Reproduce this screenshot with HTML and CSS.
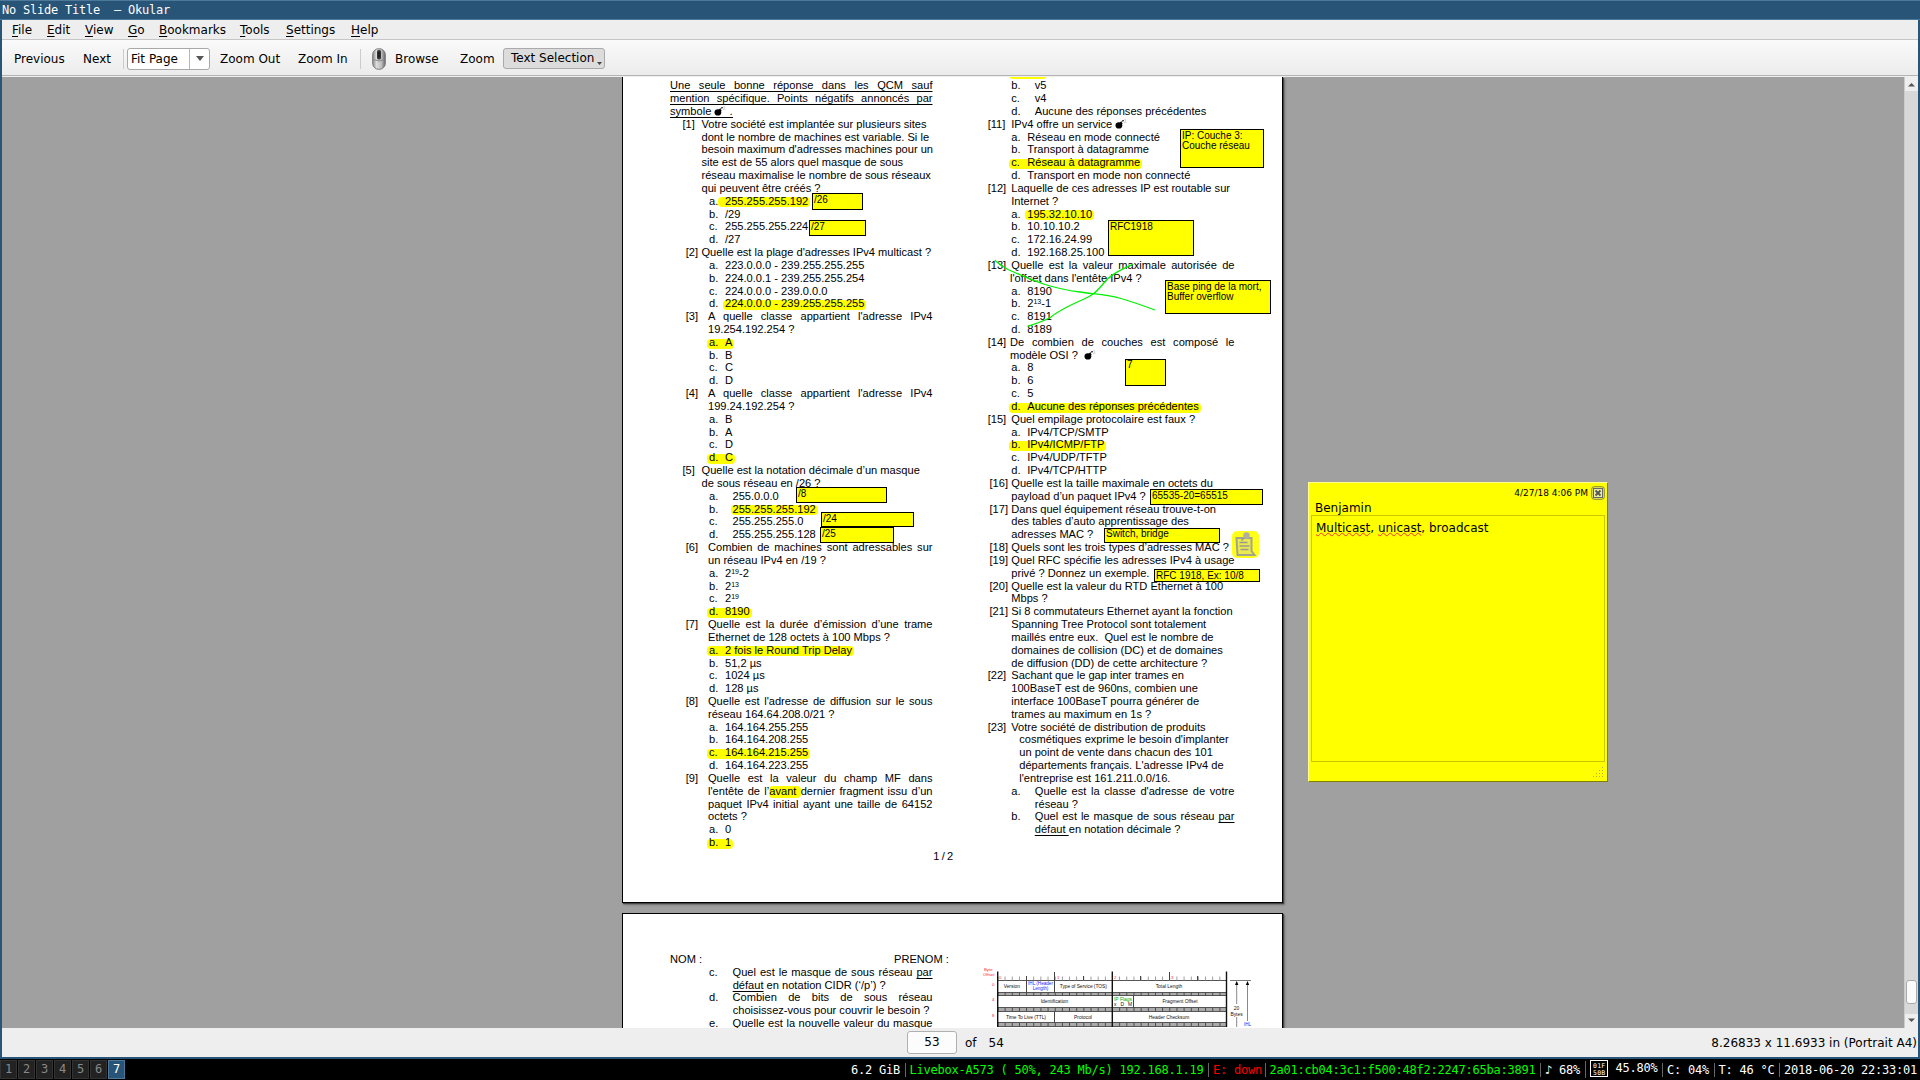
FILE: index.html
```html
<!DOCTYPE html>
<html lang="fr">
<head>
<meta charset="utf-8">
<title>No Slide Title — Okular</title>
<link rel="stylesheet" href="styles.css">
</head>
<body>
<svg class="defs" width="0" height="0" aria-hidden="true">
  <symbol id="bomb" viewBox="0 0 12 10"><ellipse cx="3.900" cy="6.400" rx="3.400" ry="3.100"/><path d="M4.500 4 6 2.600l1.700 1.900-1.400 1.300z"/><path d="M6.600 3.200 7.600 1.500 9 1.900" fill="none" stroke="#000" stroke-width=".9"/><path d="M9.500.6h1M10 2h1M10.600 3.200h.8M9.200 3.400h.8" stroke="#999" stroke-width=".7"/></symbol>
</svg>
<div class="window">
  <div class="titlebar">No Slide Title&nbsp; — Okular</div>
  <nav class="menubar">
    <span class="m-file"><u>F</u>ile</span><span class="m-edit"><u>E</u>dit</span><span class="m-view"><u>V</u>iew</span><span class="m-go"><u>G</u>o</span><span class="m-book"><u>B</u>ookmarks</span><span class="m-tools"><u>T</u>ools</span><span class="m-set"><u>S</u>ettings</span><span><u>H</u>elp</span>
  </nav>
  <div class="toolbar">
    <span class="t-prev">Previous</span><span class="t-next">Next</span><i class="sep"></i>
    <div class="combo"><span>Fit Page</span><b><svg width="8" height="5" viewBox="0 0 8 5"><path d="M0 0h8L4 5z" fill="#555"/></svg></b></div>
    <span class="t-out">Zoom Out</span><span class="t-in">Zoom In</span><i class="sep"></i>
    <svg class="mouse" width="14" height="22" viewBox="0 0 14 22"><defs><linearGradient id="mg"><stop offset="0" stop-color="#888"/><stop offset=".3" stop-color="#ddd"/><stop offset=".7" stop-color="#bbb"/><stop offset="1" stop-color="#666"/></linearGradient></defs><rect x=".7" y=".7" width="12.600" height="20.600" rx="6" fill="url(#mg)" stroke="#777"/><path d="M1.500 11.500q5.500 3 11 0" fill="none" stroke="#888"/><rect x="5" y="2" width="4" height="9.500" rx="1.800" fill="#333"/><path d="M7 4v5" stroke="#111"/></svg>
    <span class="t-browse">Browse</span><span class="t-zoom">Zoom</span>
    <span class="toggle">Text Selection<svg width="5" height="3" viewBox="0 0 5 3"><path d="M0 0h5L2.500 3z" fill="#444"/></svg></span>
  </div>

  <div class="view">
    <div class="pages">
      <section class="page first">
        <div class="cols">
          <div class="col left">
            <div class="row just"><span class="ul">Une seule bonne réponse dans les QCM sauf</span></div>
            <div class="row just"><span class="ul">mention spécifique. Points négatifs annoncés par</span></div>
            <div class="row"><span class="rule">symbole <svg class="bomb"><use href="#bomb"/></svg>&nbsp;.</span></div>
            <div class="row qa"><i>[1]</i><span>Votre société est implantée sur plusieurs sites</span></div>
            <div class="row ca"><span>dont le nombre de machines est variable. Si le</span></div>
            <div class="row ca just"><span>besoin maximum d'adresses machines pour un</span></div>
            <div class="row ca"><span>site est de 55 alors quel masque de sous</span></div>
            <div class="row ca"><span>réseau maximalise le nombre de sous réseaux</span></div>
            <div class="row ca"><span>qui peuvent être créés ?</span></div>
            <div class="row op"><i>a.</i><span class="mark ext">255.255.255.192</span></div>
            <div class="row op"><i>b.</i><span>/29</span></div>
            <div class="row op"><i>c.</i><span>255.255.255.224</span></div>
            <div class="row op"><i>d.</i><span>/27</span></div>
            <div class="row qb"><i>[2]</i><span>Quelle est la plage d'adresses IPv4 multicast ?</span></div>
            <div class="row op"><i>a.</i><span>223.0.0.0 - 239.255.255.255</span></div>
            <div class="row op"><i>b.</i><span>224.0.0.1 - 239.255.255.254</span></div>
            <div class="row op"><i>c.</i><span>224.0.0.0 - 239.0.0.0</span></div>
            <div class="row op"><i>d.</i><span class="mark">224.0.0.0 - 239.255.255.255</span></div>
            <div class="row qc just"><i>[3]</i><span>A quelle classe appartient l'adresse IPv4</span></div>
            <div class="row cc"><span>19.254.192.254 ?</span></div>
            <div class="row op"><div class="mark"><i>a.</i><span>A</span></div></div>
            <div class="row op"><i>b.</i><span>B</span></div>
            <div class="row op"><i>c.</i><span>C</span></div>
            <div class="row op"><i>d.</i><span>D</span></div>
            <div class="row qc just"><i>[4]</i><span>A quelle classe appartient l'adresse IPv4</span></div>
            <div class="row cc"><span>199.24.192.254 ?</span></div>
            <div class="row op"><i>a.</i><span>B</span></div>
            <div class="row op"><i>b.</i><span>A</span></div>
            <div class="row op"><i>c.</i><span>D</span></div>
            <div class="row op"><div class="mark"><i>d.</i><span>C</span></div></div>
            <div class="row qa"><i>[5]</i><span>Quelle est la notation décimale d’un masque</span></div>
            <div class="row ca"><span>de sous réseau en /26 ?</span></div>
            <div class="row ow"><i>a.</i><span>255.0.0.0</span></div>
            <div class="row ow"><i>b.</i><span class="mark">255.255.255.192</span></div>
            <div class="row ow"><i>c.</i><span>255.255.255.0</span></div>
            <div class="row ow"><i>d.</i><span>255.255.255.128</span></div>
            <div class="row qc just"><i>[6]</i><span>Combien de machines sont adressables sur</span></div>
            <div class="row cc"><span>un réseau IPv4 en /19 ?</span></div>
            <div class="row op"><i>a.</i><span>2<sup>19</sup>-2</span></div>
            <div class="row op"><i>b.</i><span>2<sup>13</sup></span></div>
            <div class="row op"><i>c.</i><span>2<sup>19</sup></span></div>
            <div class="row op"><div class="mark"><i>d.</i><span>8190</span></div></div>
            <div class="row qc just"><i>[7]</i><span>Quelle est la durée d’émission d’une trame</span></div>
            <div class="row cc"><span>Ethernet de 128 octets à 100 Mbps ?</span></div>
            <div class="row op"><div class="mark"><i>a.</i><span>2 fois le Round Trip Delay</span></div></div>
            <div class="row op"><i>b.</i><span>51,2 µs</span></div>
            <div class="row op"><i>c.</i><span>1024 µs</span></div>
            <div class="row op"><i>d.</i><span>128 µs</span></div>
            <div class="row qc just"><i>[8]</i><span>Quelle est l'adresse de diffusion sur le sous</span></div>
            <div class="row cc"><span>réseau 164.64.208.0/21 ?</span></div>
            <div class="row op"><i>a.</i><span>164.164.255.255</span></div>
            <div class="row op"><i>b.</i><span>164.164.208.255</span></div>
            <div class="row op"><div class="mark"><i>c.</i><span>164.164.215.255</span></div></div>
            <div class="row op"><i>d.</i><span>164.164.223.255</span></div>
            <div class="row qc just"><i>[9]</i><span>Quelle est la valeur du champ MF dans</span></div>
            <div class="row cc just"><span>l'entête de l’<em class="mark word">avant </em>dernier fragment issu d’un</span></div>
            <div class="row cc just"><span>paquet IPv4 initial ayant une taille de 64152</span></div>
            <div class="row cc"><span>octets ?</span></div>
            <div class="row op"><i>a.</i><span>0</span></div>
            <div class="row op"><div class="mark"><i>b.</i><span>1</span></div></div>
          </div>
          <div class="col right">
            <div class="row op cut"><div class="mark"></div></div>
            <div class="row ow"><i>b.</i><span>v5</span></div>
            <div class="row ow"><i>c.</i><span>v4</span></div>
            <div class="row ow"><i>d.</i><span>Aucune des réponses précédentes</span></div>
            <div class="row qa"><i>[11]</i><span>IPv4 offre un service <svg class="bomb"><use href="#bomb"/></svg></span></div>
            <div class="row op"><i>a.</i><span>Réseau en mode connecté</span></div>
            <div class="row op"><i>b.</i><span>Transport à datagramme</span></div>
            <div class="row op"><div class="mark"><i>c.</i><span>Réseau à datagramme</span></div></div>
            <div class="row op"><i>d.</i><span>Transport en mode non connecté</span></div>
            <div class="row qa"><i>[12]</i><span>Laquelle de ces adresses IP est routable sur</span></div>
            <div class="row ca"><span>Internet ?</span></div>
            <div class="row op"><i>a.</i><span class="mark">195.32.10.10</span></div>
            <div class="row op"><i>b.</i><span>10.10.10.2</span></div>
            <div class="row op"><i>c.</i><span>172.16.24.99</span></div>
            <div class="row op"><i>d.</i><span>192.168.25.100</span></div>
            <div class="row qa just"><i>[13]</i><span>Quelle est la valeur maximale autorisée de</span></div>
            <div class="row cb"><span>l'offset dans l'entête IPv4 ?</span></div>
            <div class="row op"><i>a.</i><span>8190</span></div>
            <div class="row op"><i>b.</i><span>2<sup>13</sup>-1</span></div>
            <div class="row op"><i>c.</i><span>8191</span></div>
            <div class="row op"><i>d.</i><span>8189</span></div>
            <div class="row qb just"><i>[14]</i><span>De combien de couches est composé le</span></div>
            <div class="row cb"><span>modèle OSI ?&nbsp; <svg class="bomb"><use href="#bomb"/></svg></span></div>
            <div class="row op"><i>a.</i><span>8</span></div>
            <div class="row op"><i>b.</i><span>6</span></div>
            <div class="row op"><i>c.</i><span>5</span></div>
            <div class="row op"><div class="mark"><i>d.</i><span>Aucune des réponses précédentes</span></div></div>
            <div class="row qa"><i>[15]</i><span>Quel empilage protocolaire est faux ?</span></div>
            <div class="row op"><i>a.</i><span>IPv4/TCP/SMTP</span></div>
            <div class="row op"><div class="mark"><i>b.</i><span>IPv4/ICMP/FTP</span></div></div>
            <div class="row op"><i>c.</i><span>IPv4/UDP/TFTP</span></div>
            <div class="row op"><i>d.</i><span>IPv4/TCP/HTTP</span></div>
            <div class="row qc"><i>[16]</i><span>Quelle est la taille maximale en octets du</span></div>
            <div class="row ca"><span>payload d’un paquet IPv4 ?</span></div>
            <div class="row qc"><i>[17]</i><span>Dans quel équipement réseau trouve-t-on</span></div>
            <div class="row ca"><span>des tables d’auto apprentissage des</span></div>
            <div class="row ca"><span>adresses MAC ?</span></div>
            <div class="row qc"><i>[18]</i><span>Quels sont les trois types d’adresses MAC ?</span></div>
            <div class="row qc"><i>[19]</i><span>Quel RFC spécifie les adresses IPv4 à usage</span></div>
            <div class="row ca"><span>privé ? Donnez un exemple.</span></div>
            <div class="row qc"><i>[20]</i><span>Quelle est la valeur du RTD Ethernet à 100</span></div>
            <div class="row ca"><span>Mbps ?</span></div>
            <div class="row qc"><i>[21]</i><span>Si 8 commutateurs Ethernet ayant la fonction</span></div>
            <div class="row ca"><span>Spanning Tree Protocol sont totalement</span></div>
            <div class="row ca"><span>maillés entre eux.&nbsp; Quel est le nombre de</span></div>
            <div class="row ca"><span>domaines de collision (DC) et de domaines</span></div>
            <div class="row ca"><span>de diffusion (DD) de cette architecture ?</span></div>
            <div class="row qa"><i>[22]</i><span>Sachant que le gap inter trames en</span></div>
            <div class="row ca"><span>100BaseT est de 960ns, combien une</span></div>
            <div class="row ca"><span>interface 100BaseT pourra générer de</span></div>
            <div class="row ca"><span>trames au maximum en 1s ?</span></div>
            <div class="row qa"><i>[23]</i><span>Votre société de distribution de produits</span></div>
            <div class="row cd"><span>cosmétiques exprime le besoin d'implanter</span></div>
            <div class="row cd"><span>un point de vente dans chacun des 101</span></div>
            <div class="row cd"><span>départements français. L'adresse IPv4 de</span></div>
            <div class="row cd"><span>l'entreprise est 161.211.0.0/16.</span></div>
            <div class="row ow just"><i>a.</i><span>Quelle est la classe d'adresse de votre</span></div>
            <div class="row ce"><span>réseau ?</span></div>
            <div class="row ow just"><i>b.</i><span>Quel est le masque de sous réseau <u class="ul">par</u></span></div>
            <div class="row ce"><span><u class="ul">défaut </u>en notation décimale ?</span></div>
          </div>
        </div>
        <div class="folio">1 / 2</div>

        <div class="note n1">/26</div>
        <div class="note n2">/27</div>
        <div class="note n3">/8</div>
        <div class="note n4">/24</div>
        <div class="note n5">/25</div>
        <div class="note n6">IP: Couche 3:<br>Couche réseau</div>
        <div class="note n7">RFC1918</div>
        <div class="note n8">Base ping de la mort,<br>Buffer overflow</div>
        <div class="note n9">7</div>
        <div class="note n10">65535-20=65515</div>
        <div class="note n11">Switch, bridge</div>
        <div class="note n12">RFC 1918, Ex: 10/8</div>
        <svg class="ink" width="170" height="72" viewBox="0 0 170 72"><g fill="none" stroke="#00f000" stroke-width="1.300"><path d="M4.700 3.300C9 7 13 10 18 12.500C28 17 42 23 55 27.500C66 31 78 33.500 90 35C103 37 118 37.500 131 41.500C143 45 154 49 165 53"/><path d="M37.700 69.300C45 67 56 63 61 60C67 55 76 50 93 42.500C103 38.500 106 35 113 27C120 18 130 13 142.700 7.300"/></g></svg>
        <svg class="pin" width="27" height="27" viewBox="0 0 27 27"><rect width="27" height="27" rx="5" fill="#ffff1a"/><path d="M4.500 7h15v13l3 4H5.500z" fill="#eaea50" stroke="#a4a48c" stroke-width="2"/><path d="M7.500 11.500h8M7.500 15h10M8.500 18.500h8" stroke="#99998c" stroke-width="1.500"/><path d="m9.500 9.500 4-4" stroke="#99998c" stroke-width="1.600"/><circle cx="14.500" cy="4.500" r="3.200" fill="#b0b0a0"/></svg>
      </section>

      <section class="page second">
        <div class="cols">
          <div class="col left">
            <div class="row head"><span>NOM :</span><span>PRENOM :</span></div>
            <div class="row ow just"><i>c.</i><span>Quel est le masque de sous réseau <u class="ul">par</u></span></div>
            <div class="row ce"><span><u class="ul">défaut</u> en notation CIDR (‘/p’) ?</span></div>
            <div class="row ow just"><i>d.</i><span>Combien de bits de sous réseau</span></div>
            <div class="row ce"><span>choisissez-vous pour couvrir le besoin ?</span></div>
            <div class="row ow just"><i>e.</i><span>Quelle est la nouvelle valeur du masque</span></div>
          </div>
          <svg class="diagram" width="280" height="62" viewBox="980 966 280 62">
            <g fill="#aaa"><path d="M997.500 993.500h229v3h-229zM997.500 1008.500h229v4h-229zM997.500 1023.500h229v4h-229z"/></g>
            <g stroke="#555" stroke-width="1"><path d="M997.500 981.500h229M997.500 993.500h229M997.500 996.500h229M997.500 1008.500h229M997.500 1012.500h229M997.500 1023.500h229M997.500 1027.500h229"/></g>
            <path d="M997.500 979.500h229" stroke="#888" stroke-width="4" stroke-dasharray=".8 6.360"/>
            <path d="M997.500 995h229M997.500 1010.500h229M997.500 1025.500h229" stroke="#444" stroke-width="3" stroke-dasharray=".9 6.260"/>
            <path d="M1026.500 977v17M1083.500 977v4M1140.500 977v4M1197.500 977v4M1054.500 973v21M1169.500 973v8M1054.500 1012v12M1133.500 997v12" stroke="#444"/>
            <path d="M997.700 972.500V1028M1226.500 972.500V1028M1112.300 972.500V1028" stroke="#111" stroke-width="1.400"/>
            <path d="M1230 981.500h21" stroke="#777"/><path d="M1236.700 983v22M1236.700 1018v10M1247.500 983v39" stroke="#888"/><path d="m1235 986 1.700-4 1.700 4zM1245.800 986l1.700-4 1.700 4z"/>
            <g font-size="4.300" fill="#f21"><text x="984" y="972">Byte</text><text x="983" y="977">Offset</text><text x="992" y="987">0</text><text x="992" y="1002">4</text><text x="992" y="1018">8</text><text x="999" y="979.500">0</text><text x="1057" y="979.500">1</text><text x="1114" y="979.500">2</text><text x="1171" y="979.500">3</text></g>
            <g font-size="4.900" fill="#111" text-anchor="middle"><text x="1011.800" y="989">Version</text><text x="1083.300" y="989" textLength="47">Type of Service (TOS)</text><text x="1169" y="989">Total Length</text><text x="1054.500" y="1004.300">Identification</text><text x="1180" y="1004.300">Fragment Offset</text><text x="1026" y="1019.800" textLength="40">Time To Live (TTL)</text><text x="1083" y="1019.800">Protocol</text><text x="1169" y="1019.800">Header Checksum</text><text x="1236.500" y="1011">20</text><text x="1236.500" y="1017">Bytes</text><text x="1123" y="1007" textLength="18">x D M</text></g>
            <g font-size="4.600" fill="#22f" text-anchor="middle"><text x="1040.500" y="986">IHL (Header</text><text x="1040.500" y="991.300">Length)</text><text x="1247.500" y="1027">IHL</text></g>
            <text x="1114" y="1001.700" font-size="4.900" fill="#0a0">IP Flags</text>
          </svg>
        </div>
      </section>
    </div>

    <aside class="popup">
      <div class="date">4/27/18 4:06 PM<svg width="14" height="14" viewBox="0 0 14 14"><rect x=".7" y=".7" width="12.600" height="12.600" rx="2.500" fill="#e8e860" stroke="#8a8a2a"/><rect x="2.500" y="2.500" width="9" height="9" fill="#ececa0" stroke="#666"/><path d="m4.500 4.500 5 5m0-5-5 5" stroke="#555" stroke-width="1.800"/></svg></div>
      <div class="author">Benjamin</div>
      <div class="body"><span class="sp">Multicast</span>, <span class="sp">unicast</span>, broadcast</div>
      <svg class="grip" width="12" height="12" viewBox="0 0 12 12"><path d="M10 1h1v1h-1zM7 4h1v1H7zM10 4h1v1h-1zM4 7h1v1H4zM7 7h1v1H7zM10 7h1v1h-1zM1 10h1v1H1zM4 10h1v1H4zM7 10h1v1H7zM10 10h1v1h-1z" fill="#b0b040"/></svg>
    </aside>

    <div class="scroll"><svg width="7" height="5" viewBox="0 0 7 5"><path d="M0 4.500h7L3.500 1z" fill="#555"/></svg><div class="track"><div class="thumb"></div></div><svg width="7" height="5" viewBox="0 0 7 5"><path d="M0 .5h7L3.500 4z" fill="#555"/></svg></div>
  </div>

  <div class="pagebar"><span class="num">53</span><span class="of">of</span><span class="total">54</span><span class="size">8.26833 x 11.6933 in (Portrait A4)</span></div>
</div>

<footer class="i3bar">
  <div class="spaces"><b>1</b><b>2</b><b>3</b><b>4</b><b>5</b><b>6</b><b class="on">7</b></div>
  <div class="status"><span>6.2 GiB</span><span class="ok">Livebox-A573 ( 50%, 243 Mb/s) 192.168.1.19</span><span class="bad">E: down</span><span class="ok">2a01:cb04:3c1:f500:48f2:2247:65ba:3891</span><span>♪ 68%</span><span class="bat"><svg width="18" height="17" viewBox="0 0 18 17"><rect x=".5" y=".5" width="17" height="16" fill="none" stroke="#fff"/><g fill="#fff" font-size="6.500"><text x="3" y="7.500" textLength="12">01F</text><text x="3" y="14.500" textLength="12">50B</text></g></svg><em>45.80%</em></span><span>C: 04%</span><span>T: 46 °C</span><span>2018-06-20 22:33:01</span></div>
</footer>
</body>
</html>
```
FILE: styles.css
```css
* { box-sizing: border-box; }
body { margin: 0; width: 1920px; height: 1080px; overflow: hidden; background: #000; font: 12px "DejaVu Sans", sans-serif; color: #000; }
.defs { position: absolute; }
.window { height: 1059px; background: #285577; padding: 0 2px 2px; display: flex; flex-direction: column; }

.titlebar { height: 20px; margin: 0 -2px; padding-left: 2px; border-top: 1px solid #4c7899; border-bottom: 1px solid #4c7899; color: #fff; font: 12px/18px "DejaVu Sans Mono", monospace; letter-spacing: -.22px; white-space: pre; }

.menubar { height: 20px; background: #eee; border-bottom: 1px solid #c6c6c6; padding: 1px 0 0 10px; display: flex; line-height: 19px; }
.menubar u { text-decoration: underline; text-underline-offset: 2px; }
.m-file { width: 35px; } .m-edit { width: 38px; } .m-view { width: 43px; } .m-go { width: 31px; }
.m-book { width: 81px; } .m-tools { width: 46px; } .m-set { width: 65px; }

.toolbar { height: 37px; background: linear-gradient(#fafafa, #ececec 34px); border-bottom: 1px solid #eee; box-shadow: inset 0 -1px #b4b4b4; padding: 1px 0 0 12px; display: flex; align-items: center; }
.toolbar span { white-space: nowrap; }
.t-prev { width: 69px; } .t-next { width: 40px; }
.sep { width: 1px; height: 20px; background: #ccc; margin-right: 3px; }
.combo { width: 83px; height: 22px; border: 1px solid #a8a8a8; border-radius: 3px; background: #fff; display: flex; align-items: center; margin-right: 10px; }
.combo span { width: 62px; padding-left: 3px; border-right: 1px solid #b8b8b8; line-height: 20px; }
.combo b { flex: 1; display: flex; justify-content: center; }
.t-out { width: 78px; } .t-in { width: 62px; }
.mouse { margin: 0 9px 0 8px; }
.t-browse { width: 65px; } .t-zoom { width: 43px; }
.toggle { position: relative; width: 102px; height: 21px; border: 1px solid #aaa; border-radius: 3px; background: #dcdcdc; padding-left: 7px; line-height: 19px; }
.toggle svg { position: absolute; right: 2px; bottom: 3px; }

.view { position: relative; height: 951px; background: #a0a0a0; overflow: hidden; display: flex; }
.pages { margin-left: 620px; width: 661px; flex: none; }
.page { position: relative; border: 1px solid #000; background: #fff; box-shadow: 1px 1px 1px #444, 2px 2px 2px #777; font: 11.1px/12.83px "Liberation Sans", Arial, sans-serif; }
.first { height: 826px; border-top: 0; padding-top: 2.25px; }
.second { height: 826px; margin-top: 10px; padding-top: 38.9px; }
.cols { display: grid; grid-template-columns: 262.5px 246.8px; column-gap: 55.2px; padding-left: 47px; align-items: start; }
.row { display: flex; height: 12.83px; white-space: nowrap; }
.row i { font-style: normal; flex: none; }
.row sup { font-size: 7px; line-height: 0; vertical-align: 3.5px; }
.just > span { flex: 1; text-align: justify; text-align-last: justify; }
.ul { text-decoration: underline; text-decoration-thickness: 1px; text-underline-offset: 2px; text-decoration-skip-ink: none; }
.rule { background: linear-gradient(#000, #000) 0 100% / 100% 1px no-repeat; }

.left .qa { padding-left: 12.5px; } .left .qa i { width: 19px; }
.left .qb { padding-left: 15.7px; } .left .qb i { width: 15.8px; }
.left .qc { padding-left: 15.7px; } .left .qc i { width: 22.3px; }
.left .ca { padding-left: 31.5px; }
.left .cc { padding-left: 38px; }
.left .op, .left .ow { padding-left: 39px; }
.left .ce { padding-left: 62.7px; }
.op i { width: 16px; }
.ow i { width: 23.5px; }
.right { margin-top: -12.83px; }
.right .qa i { width: 23.6px; }
.right .qb i { width: 22.3px; }
.right .qc { padding-left: 1.8px; } .right .qc i { width: 21.8px; }
.right .ca, .right .op, .right .ow { padding-left: 23.6px; }
.right .cb { padding-left: 22.3px; }
.right .cd { padding-left: 31.6px; }
.right .ce { padding-left: 47.1px; }

.mark { position: relative; display: flex; isolation: isolate; font-style: normal; }
.mark::before { content: ""; position: absolute; z-index: -1; left: -2px; right: -2px; top: 2.7px; height: 10px; border-radius: 4px; background: #ff0; }
.ext::before { left: -7.5px; }
.word { display: inline; }
.word::before { left: 0; right: 0; top: 1px; height: 12px; }
.cut .mark { width: 34px; }
.bomb { width: 12px; height: 10px; vertical-align: -1px; }
.folio { margin: .8px 0 0 310.3px; word-spacing: -.8px; }
.head span:first-child { flex: none; width: 224px; }

.note { position: absolute; border: 1px solid #000; background: #ff0; font-size: 10px; line-height: 10px; padding: 1px 0 0 1px; white-space: nowrap; }
.n1 { left: 189px; top: 116px; width: 51px; height: 17px; }
.n2 { left: 186px; top: 143px; width: 57px; height: 16px; }
.n3 { left: 173px; top: 410px; width: 91px; height: 16px; }
.n4 { left: 198px; top: 435px; width: 93px; height: 15px; }
.n5 { left: 197px; top: 450px; width: 74px; height: 16px; }
.n6 { left: 557px; top: 52px; width: 84px; height: 39px; }
.n7 { left: 485px; top: 143px; width: 86px; height: 36px; }
.n8 { left: 542px; top: 203px; width: 106px; height: 34px; }
.n9 { left: 502px; top: 282px; width: 41px; height: 27px; }
.n10 { left: 527px; top: 412px; width: 113px; height: 16px; }
.n11 { left: 481px; top: 451px; width: 116px; height: 15px; }
.n12 { left: 531px; top: 492px; width: 106px; height: 13px; }
.n9, .n11 { padding-top: 0; }
.ink { position: absolute; left: 367px; top: 180px; }
.pin { position: absolute; left: 609px; top: 454px; }
.diagram { margin: 12.6px 0 0 -7.7px; font-family: "Liberation Sans", Arial, sans-serif; overflow: visible; }

.popup { position: absolute; left: 1306px; top: 405px; width: 300px; height: 300px; background: #ff0; border: 1px solid; border-color: #ffff90 #808000 #808000 #ffff90; padding: 2px; }
.date { display: flex; justify-content: flex-end; align-items: center; gap: 3px; height: 16px; font-size: 9px; }
.author { height: 14px; padding-left: 4px; line-height: 14px; }
.body { height: 247px; border: 1px solid #c8c800; padding: 4px; line-height: 16px; }
.sp { text-decoration: underline wavy #f33 1px; text-underline-offset: 0; text-decoration-skip-ink: none; }
.grip { position: absolute; right: 3px; bottom: 3px; }

.scroll { margin-left: auto; width: 14px; background: #eee; border-left: 1px solid #ccc; display: flex; flex-direction: column; align-items: center; padding: 5px 0; }
.track { flex: 1; width: 100%; position: relative; margin: 4px 0; background: #d8d8d8; }
.thumb { position: absolute; left: 1px; right: 1px; bottom: 10px; height: 24px; border: 1px solid #aaa; border-radius: 3px; background: #fafafa; }

.pagebar { height: 29px; background: #eee; display: flex; align-items: center; padding: 0 1px 0 905px; }
.num { width: 50px; height: 23px; border: 1px solid #b0b0b0; border-radius: 3px; background: #fcfcfc; text-align: center; line-height: 21px; }
.of { margin-left: 8px; } .total { margin-left: 12px; } .size { margin-left: auto; }

.i3bar { height: 21px; display: flex; justify-content: space-between; color: #fff; font: 12px "DejaVu Sans Mono", monospace; letter-spacing: -.225px; }
.spaces { display: flex; gap: 1px; padding-top: 1px; }
.spaces b { width: 17px; height: 19px; border: 1px solid #333; background: #222; color: #888; font-weight: normal; text-align: center; line-height: 17px; }
.spaces .on { border-color: #4c7899; background: #285577; color: #fff; }
.status { display: flex; align-items: center; padding-right: 3px; white-space: pre; }
.status > span + span { margin-left: 4.5px; padding-left: 4px; border-left: 1px solid #666; line-height: 14px; }
.status .bad + .ok { margin-left: 3px; padding-left: 3.5px; }
.status .ok { color: #0f0; } .status .bad { color: #f00; }
.status .bat { display: flex; align-items: center; gap: 8px; height: 17px; }
.bat svg { margin-top: -2px; }
.bat em { font-style: normal; margin-top: -3px; }
```
